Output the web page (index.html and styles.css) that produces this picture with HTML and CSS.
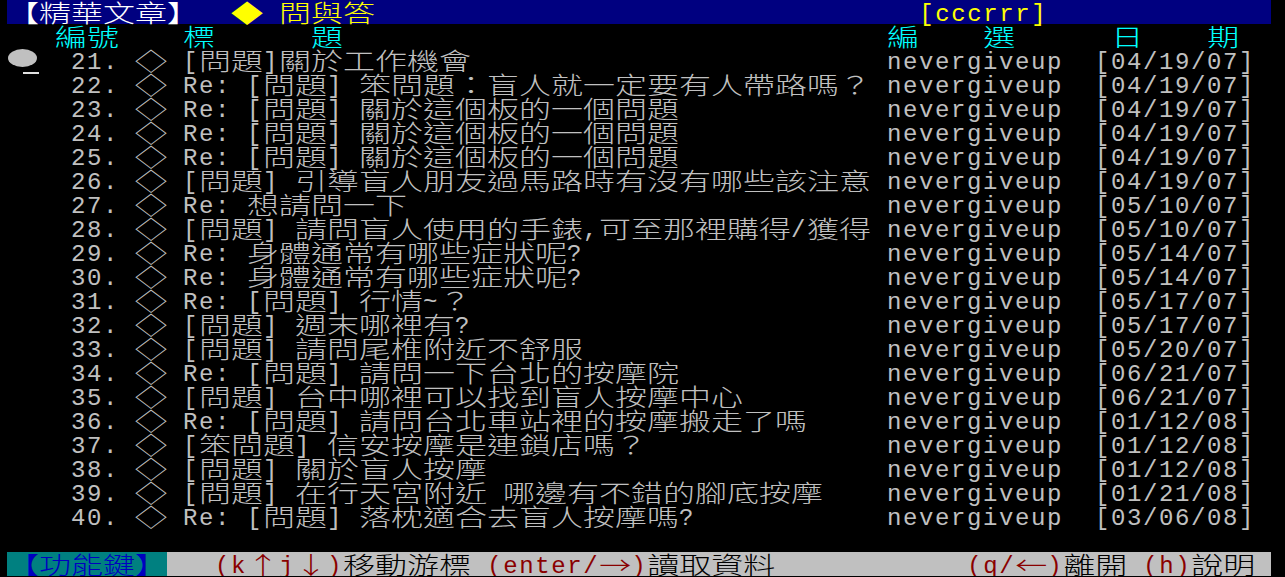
FILE: index.html
```html
<!DOCTYPE html>
<html lang="zh-Hant">
<head>
    <meta charset="UTF-8">
    <title>精華文章 - 問與答</title>
    <link rel="stylesheet" href="styles.css">
</head>
<body>
<div class="screen">
    <div class="line bar"><span class="w hi">【精華文章】</span>  <span class="w yellow">◆</span> <span class="w yellow">問與答</span>                                  <span class="yellow">[cccrrr]</span></div>
    <div class="line heading">   <span class="w">編號</span>    <span class="w">標</span>      <span class="w">題</span>                                  <span class="w">編</span>    <span class="w">選</span>      <span class="w">日</span>    <span class="w">期</span></div>

    <div class="list">
        <div class="item">
            <div class="cell pick"><span class="pointer"></span><span class="caret"></span></div>
            <div class="cell">21.</div>
            <div class="cell"><span class="w">◇</span></div>
            <div class="cell">[<span class="w">問題</span>]<span class="w">關於工作機會</span></div>
            <div class="cell">nevergiveup</div>
            <div class="cell">[04/19/07]</div>
        </div>
        <div class="item">
            <div class="cell pick"></div>
            <div class="cell">22.</div>
            <div class="cell"><span class="w">◇</span></div>
            <div class="cell">Re: [<span class="w">問題</span>] <span class="w">笨問題：盲人就一定要有人帶路嗎？</span></div>
            <div class="cell">nevergiveup</div>
            <div class="cell">[04/19/07]</div>
        </div>
        <div class="item">
            <div class="cell pick"></div>
            <div class="cell">23.</div>
            <div class="cell"><span class="w">◇</span></div>
            <div class="cell">Re: [<span class="w">問題</span>] <span class="w">關於這個板的一個問題</span></div>
            <div class="cell">nevergiveup</div>
            <div class="cell">[04/19/07]</div>
        </div>
        <div class="item">
            <div class="cell pick"></div>
            <div class="cell">24.</div>
            <div class="cell"><span class="w">◇</span></div>
            <div class="cell">Re: [<span class="w">問題</span>] <span class="w">關於這個板的一個問題</span></div>
            <div class="cell">nevergiveup</div>
            <div class="cell">[04/19/07]</div>
        </div>
        <div class="item">
            <div class="cell pick"></div>
            <div class="cell">25.</div>
            <div class="cell"><span class="w">◇</span></div>
            <div class="cell">Re: [<span class="w">問題</span>] <span class="w">關於這個板的一個問題</span></div>
            <div class="cell">nevergiveup</div>
            <div class="cell">[04/19/07]</div>
        </div>
        <div class="item">
            <div class="cell pick"></div>
            <div class="cell">26.</div>
            <div class="cell"><span class="w">◇</span></div>
            <div class="cell">[<span class="w">問題</span>] <span class="w">引導盲人朋友過馬路時有沒有哪些該注意</span></div>
            <div class="cell">nevergiveup</div>
            <div class="cell">[04/19/07]</div>
        </div>
        <div class="item">
            <div class="cell pick"></div>
            <div class="cell">27.</div>
            <div class="cell"><span class="w">◇</span></div>
            <div class="cell">Re: <span class="w">想請問一下</span></div>
            <div class="cell">nevergiveup</div>
            <div class="cell">[05/10/07]</div>
        </div>
        <div class="item">
            <div class="cell pick"></div>
            <div class="cell">28.</div>
            <div class="cell"><span class="w">◇</span></div>
            <div class="cell">[<span class="w">問題</span>] <span class="w">請問盲人使用的手錶</span>,<span class="w">可至那裡購得</span>/<span class="w">獲得</span></div>
            <div class="cell">nevergiveup</div>
            <div class="cell">[05/10/07]</div>
        </div>
        <div class="item">
            <div class="cell pick"></div>
            <div class="cell">29.</div>
            <div class="cell"><span class="w">◇</span></div>
            <div class="cell">Re: <span class="w">身體通常有哪些症狀呢</span>?</div>
            <div class="cell">nevergiveup</div>
            <div class="cell">[05/14/07]</div>
        </div>
        <div class="item">
            <div class="cell pick"></div>
            <div class="cell">30.</div>
            <div class="cell"><span class="w">◇</span></div>
            <div class="cell">Re: <span class="w">身體通常有哪些症狀呢</span>?</div>
            <div class="cell">nevergiveup</div>
            <div class="cell">[05/14/07]</div>
        </div>
        <div class="item">
            <div class="cell pick"></div>
            <div class="cell">31.</div>
            <div class="cell"><span class="w">◇</span></div>
            <div class="cell">Re: [<span class="w">問題</span>] <span class="w">行情</span>~<span class="w">？</span></div>
            <div class="cell">nevergiveup</div>
            <div class="cell">[05/17/07]</div>
        </div>
        <div class="item">
            <div class="cell pick"></div>
            <div class="cell">32.</div>
            <div class="cell"><span class="w">◇</span></div>
            <div class="cell">[<span class="w">問題</span>] <span class="w">週末哪裡有</span>?</div>
            <div class="cell">nevergiveup</div>
            <div class="cell">[05/17/07]</div>
        </div>
        <div class="item">
            <div class="cell pick"></div>
            <div class="cell">33.</div>
            <div class="cell"><span class="w">◇</span></div>
            <div class="cell">[<span class="w">問題</span>] <span class="w">請問尾椎附近不舒服</span></div>
            <div class="cell">nevergiveup</div>
            <div class="cell">[05/20/07]</div>
        </div>
        <div class="item">
            <div class="cell pick"></div>
            <div class="cell">34.</div>
            <div class="cell"><span class="w">◇</span></div>
            <div class="cell">Re: [<span class="w">問題</span>] <span class="w">請問一下台北的按摩院</span></div>
            <div class="cell">nevergiveup</div>
            <div class="cell">[06/21/07]</div>
        </div>
        <div class="item">
            <div class="cell pick"></div>
            <div class="cell">35.</div>
            <div class="cell"><span class="w">◇</span></div>
            <div class="cell">[<span class="w">問題</span>] <span class="w">台中哪裡可以找到盲人按摩中心</span></div>
            <div class="cell">nevergiveup</div>
            <div class="cell">[06/21/07]</div>
        </div>
        <div class="item">
            <div class="cell pick"></div>
            <div class="cell">36.</div>
            <div class="cell"><span class="w">◇</span></div>
            <div class="cell">Re: [<span class="w">問題</span>] <span class="w">請問台北車站裡的按摩搬走了嗎</span></div>
            <div class="cell">nevergiveup</div>
            <div class="cell">[01/12/08]</div>
        </div>
        <div class="item">
            <div class="cell pick"></div>
            <div class="cell">37.</div>
            <div class="cell"><span class="w">◇</span></div>
            <div class="cell">[<span class="w">笨問題</span>] <span class="w">信安按摩是連鎖店嗎？</span></div>
            <div class="cell">nevergiveup</div>
            <div class="cell">[01/12/08]</div>
        </div>
        <div class="item">
            <div class="cell pick"></div>
            <div class="cell">38.</div>
            <div class="cell"><span class="w">◇</span></div>
            <div class="cell">[<span class="w">問題</span>] <span class="w">關於盲人按摩</span></div>
            <div class="cell">nevergiveup</div>
            <div class="cell">[01/12/08]</div>
        </div>
        <div class="item">
            <div class="cell pick"></div>
            <div class="cell">39.</div>
            <div class="cell"><span class="w">◇</span></div>
            <div class="cell">[<span class="w">問題</span>] <span class="w">在行天宮附近</span> <span class="w">哪邊有不錯的腳底按摩</span></div>
            <div class="cell">nevergiveup</div>
            <div class="cell">[01/21/08]</div>
        </div>
        <div class="item">
            <div class="cell pick"></div>
            <div class="cell">40.</div>
            <div class="cell"><span class="w">◇</span></div>
            <div class="cell">Re: [<span class="w">問題</span>] <span class="w">落枕適合去盲人按摩嗎</span>?</div>
            <div class="cell">nevergiveup</div>
            <div class="cell">[03/06/08]</div>
        </div>
    </div>

    <div class="line"></div>
    <div class="line status"><span class="keys"><span class="w">【功能鍵】</span></span><span class="help">   <span class="red">(k<span class="w">↑</span>j<span class="w">↓</span>)</span><span class="w">移動游標</span> <span class="red">(enter/<span class="w">→</span>)</span><span class="w">讀取資料</span>            <span class="red">(q/<span class="w">←</span>)</span><span class="w">離開</span> <span class="red">(h)</span><span class="w">說明</span> </span></div>
</div>
</body>
</html>
```

FILE: styles.css
```css
body {
    margin: 0;
    background: #000;
}
.screen {
    padding-left: 7px;
    font-family: "Liberation Mono", monospace;
    font-size: 24px;
    letter-spacing: 1.6px;
    color: #c0c0c0;
}
.line {
    width: 1264px;
    height: 24px;
    line-height: 30px;
    white-space: pre;
}

/* double-width glyphs: 2 cells wide, squashed to the 24px row */
.w {
    display: inline-block;
    vertical-align: top;
    height: 24px;
    font-family: "Noto Sans CJK TC", sans-serif;
    font-size: 32px;
    font-weight: 300;
    letter-spacing: 0;
    line-height: 24px;
    transform: translateY(-1px) scaleY(.75);
}

.bar {
    background: #000080;
}
.hi {
    color: #fff;
}
.yellow {
    color: #ffff00;
}
.heading {
    color: #00ffff;
}

.item {
    display: grid;
    grid-template-columns: 64px 64px 48px 704px 208px 160px;
    height: 24px;
    line-height: 30px;
    white-space: pre;
}
.pick {
    position: relative;
}
.pointer {
    display: inline-block;
    vertical-align: top;
    width: 29px;
    height: 18px;
    margin: 1px 0 0 1px;
    border-radius: 50%;
    background: #c0c0c0;
}
.caret {
    position: absolute;
    left: 16px;
    top: 24px;
    width: 16px;
    height: 2px;
    background: #e0e0e0;
}

.status {
    display: flex;
}
.keys {
    flex: 0 0 160px;
    background: #008080;
    color: #0000c0;
}
.help {
    flex: 0 0 1104px;
    background: #c0c0c0;
    color: #000;
}
.red {
    color: #8a0000;
}
```
